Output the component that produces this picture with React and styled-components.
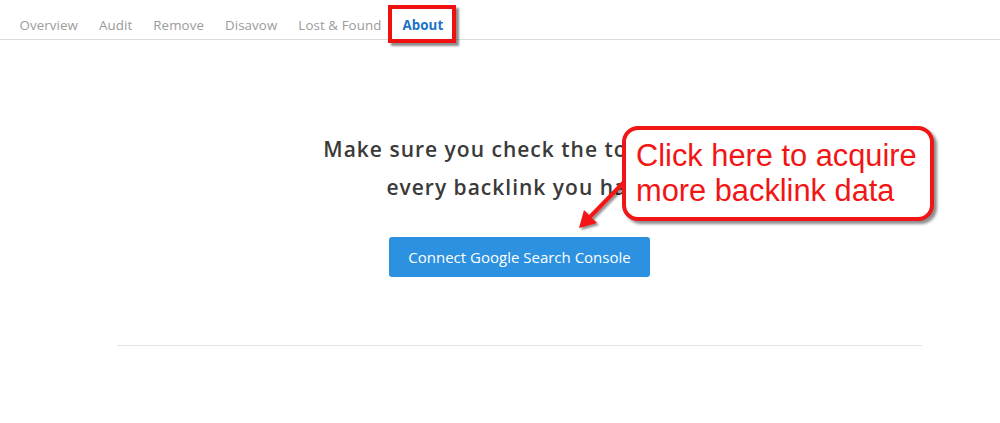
import React from "react";
import styled, { createGlobalStyle } from "styled-components";

const Global = createGlobalStyle`
  html, body { margin: 0; padding: 0; background: #fff; }
  body { font-family: "Open Sans", "Noto Sans", sans-serif; }
`;

const Page = styled.div`
  position: relative;
  width: 1000px;
  height: 423px;
  overflow: hidden;
`;

const Tabs = styled.nav`
  display: flex;
  align-items: flex-start;
  height: 24px;
  padding: 15px 0 0 9px;
  border-bottom: 1px solid #dcdcdc;
`;

const Tab = styled.div`
  position: relative;
  padding: 0 10.5px;
  font-size: 13.3px;
  line-height: 20px;
  letter-spacing: 0.1px;
  color: ${(p) => (p.$active ? "#1a73c6" : "#9b9b9b")};
  font-weight: ${(p) => (p.$active ? 700 : 500)};
  ${(p) =>
    p.$active &&
    `
    &::after {
      content: "";
      position: absolute;
      left: -4px;
      right: -2px;
      top: -10px;
      bottom: -8px;
      border: 4px solid #f01010;
      box-shadow: 3px 3px 2px rgba(0,0,0,0.45);
    }
  `}
`;

const Content = styled.main`
  margin-left: 117px;
  width: 805px;
  display: flex;
  flex-direction: column;
  align-items: center;
  padding-top: 90px;
`;

const Heading = styled.h2`
  margin: 0;
  text-align: center;
  font-size: 21px;
  font-weight: 600;
  letter-spacing: 1px;
  line-height: 38px;
  color: #3a3a3a;
`;

const Button = styled.button`
  margin-top: 31px;
  width: 261px;
  height: 40px;
  border: none;
  border-radius: 3px;
  background: #2c91e0;
  color: #fff;
  font-family: "Open Sans", "Noto Sans", sans-serif;
  font-size: 15px;
  font-weight: 500;
`;

const Rule = styled.hr`
  align-self: stretch;
  margin: 68px 0 0;
  border: none;
  border-top: 1.5px solid #e4e4e4;
`;

const Callout = styled.div`
  position: absolute;
  left: 622px;
  top: 126px;
  border: 4px solid #f21515;
  border-radius: 16px;
  background: #fff;
  box-shadow: 3px 3px 3px rgba(0, 0, 0, 0.45);
  padding: 8px 0 0 10px;
  box-sizing: content-box;
  width: 294px;
  height: 79px;
  font-family: "Liberation Sans", Arial, sans-serif;
  font-size: 30.8px;
  line-height: 35px;
  color: #f21515;
  white-space: nowrap;
`;

const Arrow = styled.svg`
  position: absolute;
  left: 570px;
  top: 170px;
  overflow: visible;
`;

export default function App() {
  const tabs = ["Overview", "Audit", "Remove", "Disavow", "Lost & Found", "About"];
  return (
    <Page>
      <Global />
      <Tabs>
        {tabs.map((t) => (
          <Tab key={t} $active={t === "About"}>
            {t}
          </Tab>
        ))}
      </Tabs>
      <Content>
        <Heading>
          Make sure you check the toxicity of
          <br />
          every backlink you have
        </Heading>
        <Button>Connect Google Search Console</Button>
        <Rule />
      </Content>
      <Arrow width="60" height="65" viewBox="0 0 60 65">
        <defs>
          <filter id="sh" x="-30%" y="-30%" width="160%" height="160%">
            <feDropShadow dx="2" dy="2" stdDeviation="1.2" floodColor="#000" floodOpacity="0.45" />
          </filter>
        </defs>
        <g filter="url(#sh)">
          <line x1="54" y1="12" x2="18" y2="49" stroke="#f21515" strokeWidth="4" />
          <polygon points="9,58 14,40 27,53" fill="#f21515" />
        </g>
      </Arrow>
      <Callout>
        Click here to acquire
        <br />
        more backlink data
      </Callout>
    </Page>
  );
}
